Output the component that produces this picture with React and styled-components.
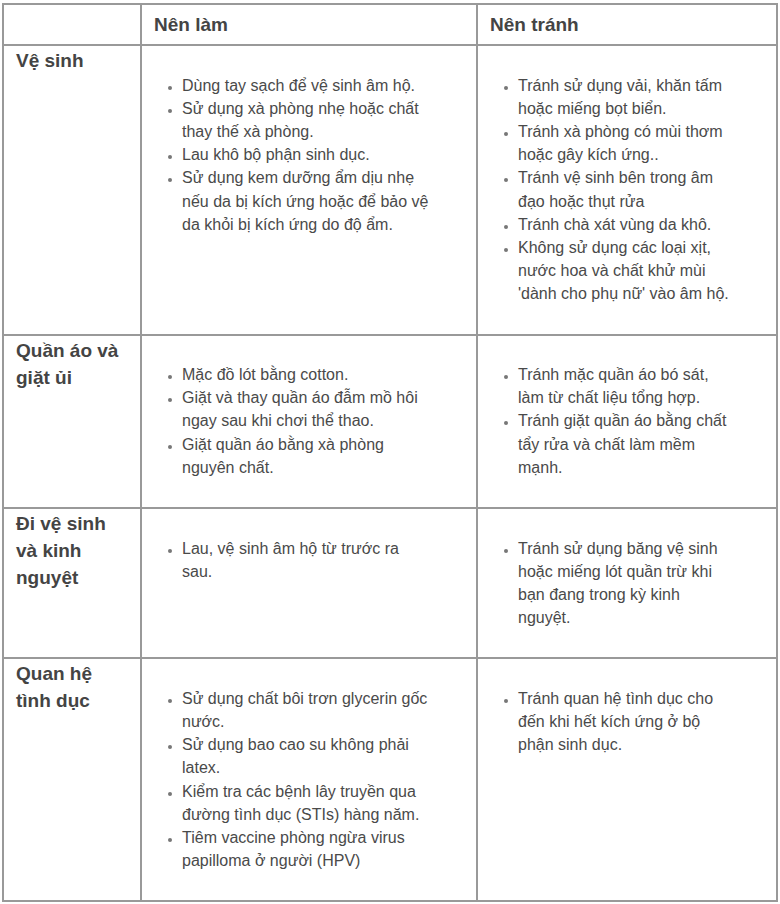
import React from 'react';
import styled, { createGlobalStyle } from 'styled-components';

const GlobalStyle = createGlobalStyle`
  body {
    margin: 0;
    background: #fff;
    font-family: Arial, "Liberation Sans", sans-serif;
    color: #444;
  }
`;

const Table = styled.table`
  width: 776px;
  margin: 3px 0 0 2px;
  border-collapse: collapse;
  table-layout: fixed;
`;

const HeadCell = styled.th`
  border: 2px solid #999;
  padding: 6px 12px;
  text-align: left;
  vertical-align: top;
  font-size: 19px;
  line-height: 27px;
  font-weight: bold;
  color: #444;
`;

const LabelCell = styled.td`
  border: 2px solid #999;
  padding: 1px 12px;
  vertical-align: top;
  font-size: 19px;
  line-height: 27px;
  font-weight: bold;
  color: #444;
`;

const Cell = styled.td`
  border: 2px solid #999;
  padding: 1px 12px;
  vertical-align: top;
`;

const List = styled.ul`
  margin: 26.5px 0 27px;
  padding: 0 ${p => p.$right}px 0 28px;
  font-size: 16px;
  line-height: 23.2px;
  color: #4a4a4a;

  li::marker {
    color: #777;
    font-size: 12px;
  }
`;

const rows = [
  {
    label: 'Vệ sinh',
    doList: [
      'Dùng tay sạch để vệ sinh âm hộ.',
      'Sử dụng xà phòng nhẹ hoặc chất thay thế xà phòng.',
      'Lau khô bộ phận sinh dục.',
      'Sử dụng kem dưỡng ẩm dịu nhẹ nếu da bị kích ứng hoặc để bảo vệ da khỏi bị kích ứng do độ ẩm.',
    ],
    avoidList: [
      'Tránh sử dụng vải, khăn tấm hoặc miếng bọt biển.',
      'Tránh xà phòng có mùi thơm hoặc gây kích ứng..',
      'Tránh vệ sinh bên trong âm đạo hoặc thụt rửa',
      'Tránh chà xát vùng da khô.',
      "Không sử dụng các loại xịt, nước hoa và chất khử mùi 'dành cho phụ nữ' vào âm hộ.",
    ],
  },
  {
    label: 'Quần áo và giặt ủi',
    doList: [
      'Mặc đồ lót bằng cotton.',
      'Giặt và thay quần áo đẫm mồ hôi ngay sau khi chơi thể thao.',
      'Giặt quần áo bằng xà phòng nguyên chất.',
    ],
    avoidList: [
      'Tránh mặc quần áo bó sát, làm từ chất liệu tổng hợp.',
      'Tránh giặt quần áo bằng chất tẩy rửa và chất làm mềm mạnh.',
    ],
  },
  {
    label: 'Đi vệ sinh và kinh nguyệt',
    doList: ['Lau, vệ sinh âm hộ từ trước ra sau.'],
    avoidList: [
      'Tránh sử dụng băng vệ sinh hoặc miếng lót quần trừ khi bạn đang trong kỳ kinh nguyệt.',
    ],
  },
  {
    label: 'Quan hệ tình dục',
    doList: [
      'Sử dụng chất bôi trơn glycerin gốc nước.',
      'Sử dụng bao cao su không phải latex.',
      'Kiểm tra các bệnh lây truyền qua đường tình dục (STIs) hàng năm.',
      'Tiêm vaccine phòng ngừa virus papilloma ở người (HPV)',
    ],
    avoidList: [
      'Tránh quan hệ tình dục cho đến khi hết kích ứng ở bộ phận sinh dục.',
    ],
  },
];

export default function App() {
  return (
    <>
      <GlobalStyle />
      <Table>
        <colgroup>
          <col style={{ width: 138 }} />
          <col style={{ width: 336 }} />
          <col />
        </colgroup>
        <thead>
          <tr>
            <HeadCell />
            <HeadCell>Nên làm</HeadCell>
            <HeadCell>Nên tránh</HeadCell>
          </tr>
        </thead>
        <tbody>
          {rows.map(r => (
            <tr key={r.label}>
              <LabelCell>{r.label}</LabelCell>
              <Cell>
                <List $right={33}>
                  {r.doList.map(t => <li key={t}>{t}</li>)}
                </List>
              </Cell>
              <Cell>
                <List $right={28}>
                  {r.avoidList.map(t => <li key={t}>{t}</li>)}
                </List>
              </Cell>
            </tr>
          ))}
        </tbody>
      </Table>
    </>
  );
}
